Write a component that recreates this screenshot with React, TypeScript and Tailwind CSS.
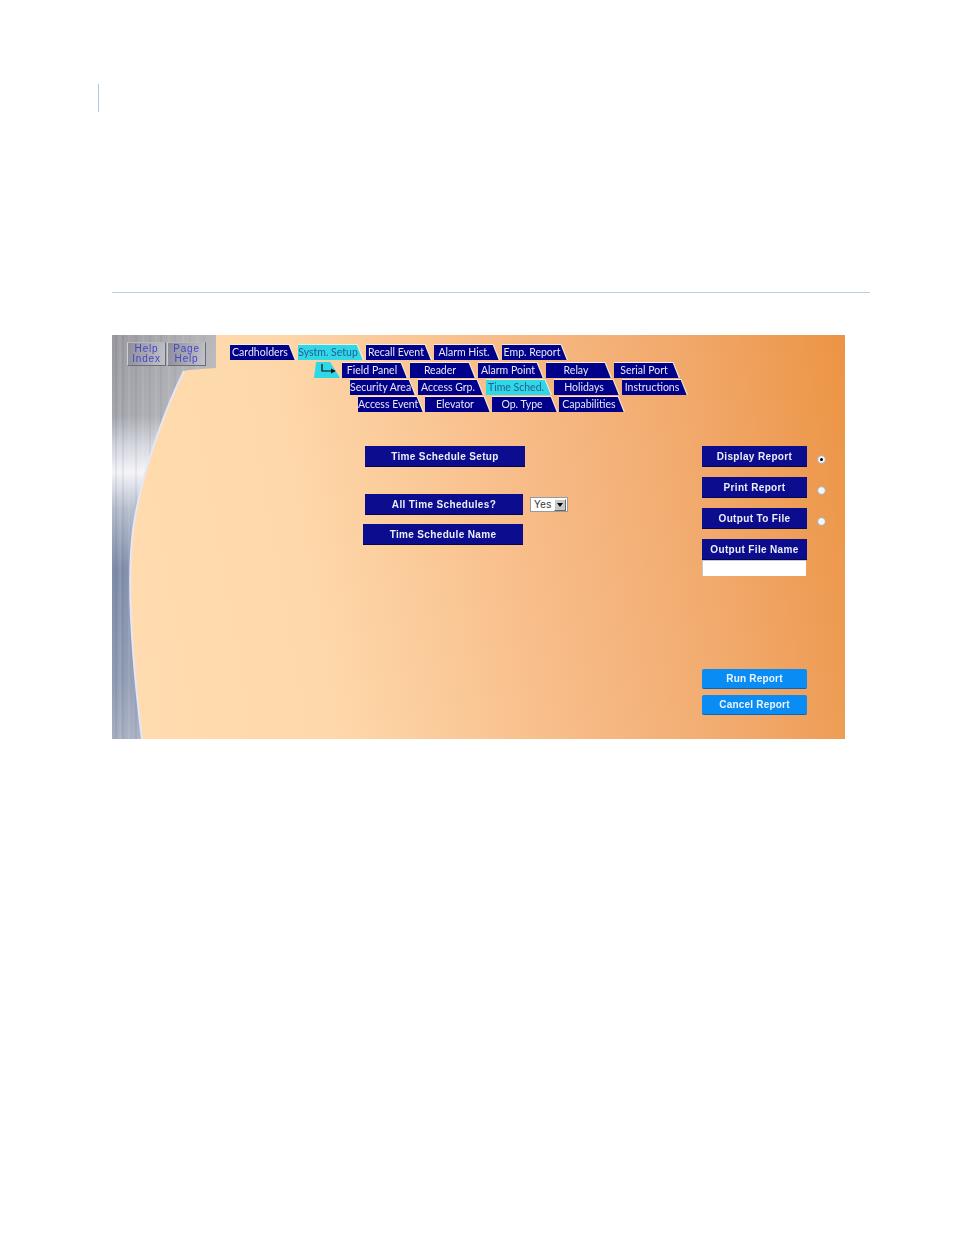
import { ReactNode } from "react"

const rows = [
  { layout: "ml-0 gap-0.5", tabs: [["Cardholders"], ["Systm. Setup", "on"], ["Recall Event"], ["Alarm Hist."], ["Emp. Report"]] },
  { layout: "ml-[112px] mt-px gap-0.5", tabs: [["Field Panel"], ["Reader"], ["Alarm Point"], ["Relay"], ["Serial Port"]] },
  { layout: "ml-[120px] gap-0.5", tabs: [["Security Area"], ["Access Grp."], ["Time Sched.", "on"], ["Holidays"], ["Instructions"]] },
  { layout: "ml-[128px] gap-px", tabs: [["Access Event"], ["Elevator"], ["Op. Type"], ["Capabilities"]] },
]

function Tab({ label, on }: { label?: string; on?: boolean }) {
  return (
    <div className="h-4 w-[66px] shrink-0 bg-[#f6ead8] [clip-path:polygon(0_0,90%_0,100%_100%,0_100%)]">
      <div
        className={`mt-px flex h-[15px] items-center pr-1.5 pb-px font-['Lato',sans-serif] text-[10.5px] leading-none whitespace-nowrap [clip-path:polygon(0_0,89%_0,98%_100%,0_100%)] ${
          on ? "bg-[#2ed8e6] text-[#2a5c94]" : "bg-[#00008a] text-[#e8e8f4]"
        }`}
      >
        <span className="w-full text-center blur-[0.3px]">{label}</span>
      </div>
    </div>
  )
}

function ArrowTab() {
  return (
    <div className="flex h-4 w-[26px] shrink-0 items-center bg-[#2ed8e6] [clip-path:polygon(0_100%,8%_0,62%_0,100%_100%)]">
      <svg width="20" height="14" viewBox="0 0 20 14" className="ml-1.5">
        <path d="M2 1 V8 H13" fill="none" stroke="#111" strokeWidth="1.2" />
        <path d="M11 5.5 L16 8 L11 10.5 Z" fill="#111" />
      </svg>
    </div>
  )
}

function NavyButton({ children, className = "" }: { children: ReactNode; className?: string }) {
  return (
    <div
      className={`flex h-[21px] items-center justify-center border-b border-[#06064f] bg-[#0c0c8e] font-['Liberation_Sans',sans-serif] text-[10px] font-bold tracking-[0.35px] text-[#eceef6] ${className}`}
    >
      <span className="blur-[0.3px]">{children}</span>
    </div>
  )
}

function BlueButton({ children }: { children: ReactNode }) {
  return (
    <div className="flex h-5 w-[105px] items-center justify-center rounded-[2px] border-b border-[#0b66b8] bg-[#0a8cf5] font-['Liberation_Sans',sans-serif] text-[10px] font-bold tracking-[0.2px] text-[#eaf4ff]">
      <span className="blur-[0.3px]">{children}</span>
    </div>
  )
}

function Radio({ checked }: { checked?: boolean }) {
  return (
    <div className="mt-[9px] flex h-[9px] w-[9px] items-center justify-center rounded-full border border-[#a8a8a8] bg-[#f4f4f4]">
      {checked && <div className="h-[3px] w-[3px] rounded-full bg-black" />}
    </div>
  )
}

function HelpButton({ top, bottom }: { top: string; bottom: string }) {
  return (
    <div className="flex h-6 w-[39px] flex-col items-center justify-center border border-t-[#b8b8bc] border-r-[#6c6c74] border-b-[#6c6c74] border-l-[#d0d0d4] bg-[linear-gradient(100deg,#8e8e9a,#c2c2ca)] font-['Liberation_Sans',sans-serif] text-[10px] leading-[10px] tracking-[0.8px] text-[#4444c8]">
      <span className="blur-[0.3px]">{top}</span>
      <span className="blur-[0.3px]">{bottom}</span>
    </div>
  )
}

function Metal() {
  const curve = "C60 60 30 130 21 195 C16 235 17 300 30 404"
  const outline = `M0 0 H104 V33 C92 34 80 34 72 36 ${curve} H0 Z`
  return (
    <svg width="733" height="404" viewBox="0 0 733 404" className="absolute top-0 left-0">
      <defs>
        <linearGradient id="steel" x1="0" y1="0" x2="0" y2="1">
          <stop offset="0" stopColor="#9a9aa0" />
          <stop offset="0.2" stopColor="#a4a6ac" />
          <stop offset="0.27" stopColor="#d0d2dc" />
          <stop offset="0.34" stopColor="#f4f4f8" />
          <stop offset="0.43" stopColor="#b4bccc" />
          <stop offset="0.58" stopColor="#7f8ca8" />
          <stop offset="0.85" stopColor="#8f9bb2" />
          <stop offset="1" stopColor="#a6aec2" />
        </linearGradient>
        <linearGradient id="fade" x1="0" y1="0" x2="1" y2="0">
          <stop offset="0" stopColor="#fff" stopOpacity="0" />
          <stop offset="1" stopColor="#fff" stopOpacity="0.3" />
        </linearGradient>
        <clipPath id="steelClip">
          <path d={outline} />
        </clipPath>
      </defs>
      <path d={outline} fill="url(#steel)" />
      <g clipPath="url(#steelClip)">
        <g strokeWidth="1.5" opacity="0.1">
          <path d="M4 0 V404 M11 0 V404 M24 0 V404 M38 0 V404 M49 0 V404 M63 0 V404 M78 0 V404 M92 0 V404" stroke="#3c4660" />
          <path d="M8 0 V404 M17 0 V404 M31 0 V404 M44 0 V404 M57 0 V404 M71 0 V404 M85 0 V404" stroke="#ffffff" />
        </g>
        <rect x="0" y="0" width="104" height="404" fill="url(#fade)" />
      </g>
      <path d={`M72 36 ${curve}`} fill="none" stroke="#e6e6f6" strokeWidth="2" />
    </svg>
  )
}

export default function App() {
  return (
    <div className="h-[1235px] w-[954px] bg-white pt-[84px]">
      <div className="ml-[98px] h-7 w-px bg-[#a9c8f0]" />
      <div className="mr-[84px] ml-[112px] mt-[180px] h-px bg-[#b9cfe8]" />

      <div className="relative mt-[42px] ml-[112px] flex h-[404px] w-[733px] flex-col bg-[linear-gradient(80deg,#ffdcb0_0%,#fed8aa_28%,#f7bb87_58%,#f1a86a_80%,#ec9444_100%)]">
        <Metal />

        <div className="relative flex">
          <div className="mt-[7px] ml-[15px] flex gap-px">
            <HelpButton top="Help" bottom="Index" />
            <HelpButton top="Page" bottom="Help" />
          </div>

          <div className="mt-[9px] ml-6 flex flex-col gap-px">
            {rows.map((row, i) => (
              <div key={i} className={`flex ${row.layout}`}>
                {i === 1 && <div className="-ml-7"><ArrowTab /></div>}
                {row.tabs.map(([label, on]) => (
                  <Tab key={label} label={label} on={on === "on"} />
                ))}
              </div>
            ))}
          </div>
        </div>

        <div className="relative mt-[34px] flex flex-1 pb-6">
          <div className="ml-[251px] flex w-[339px] flex-col">
            <NavyButton className="ml-0.5 w-40">Time Schedule Setup</NavyButton>
            <div className="mt-[27px] ml-0.5 flex items-center gap-[7px]">
              <NavyButton className="w-[158px]">All Time Schedules?</NavyButton>
              <div className="flex h-[15px] w-[38px] items-center justify-between border border-[#9a9a9a] bg-white pr-px pl-[3px] font-['Liberation_Sans',sans-serif] text-[10px] tracking-[0.5px] text-[#333]">
                Yes
                <span className="flex h-3 w-3 items-center justify-center border border-t-white border-r-[#666] border-b-[#666] border-l-white bg-[#c8c8c8]">
                  <span className="h-0 w-0 border-x-[3px] border-t-[4px] border-x-transparent border-t-black" />
                </span>
              </div>
            </div>
            <NavyButton className="mt-[9px] w-40">Time Schedule Name</NavyButton>
          </div>

          <div className="flex w-[130px] flex-col">
            {[["Display Report", true], ["Print Report", false], ["Output To File", false]].map(([label, checked]) => (
              <div key={label as string} className="mb-2.5 flex gap-[10px]">
                <NavyButton className="w-[105px]">{label as string}</NavyButton>
                <Radio checked={checked as boolean} />
              </div>
            ))}
            <NavyButton className="w-[105px]">Output File Name</NavyButton>
            <div className="h-4 w-[104px] border-t border-l border-[#c8c8c8] bg-white" />
            <div className="mt-auto flex flex-col gap-1.5">
              <BlueButton>Run Report</BlueButton>
              <BlueButton>Cancel Report</BlueButton>
            </div>
          </div>
        </div>
      </div>
    </div>
  )
}
